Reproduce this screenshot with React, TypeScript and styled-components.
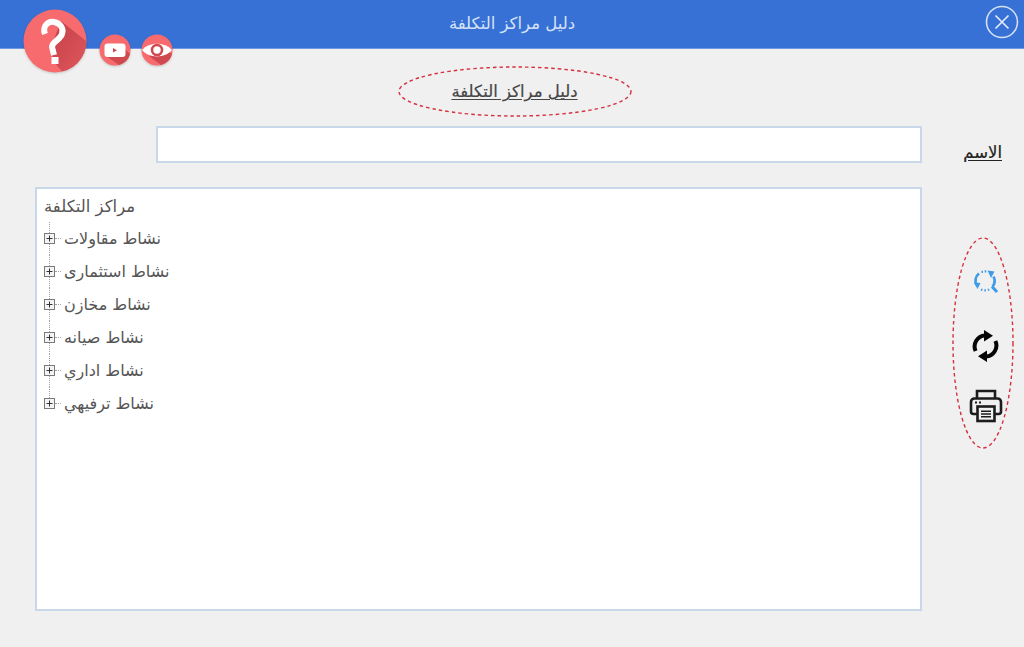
import React from "react";
import styled, { createGlobalStyle } from "styled-components";

const GlobalStyle = createGlobalStyle`
  html, body {
    margin: 0;
    padding: 0;
    background: #f0f0f0;
  }
  * {
    box-sizing: border-box;
  }
`;

const branches = [
  "نشاط مقاولات",
  "نشاط استثمارى",
  "نشاط مخازن",
  "نشاط صيانه",
  "نشاط اداري",
  "نشاط ترفيهي",
];

const Dashes: React.FC<{ width: number; height: number }> = ({ width, height }) => (
  <DashSvg width={width} height={height} viewBox={`0 0 ${width} ${height}`}>
    <ellipse
      cx={width / 2}
      cy={height / 2}
      rx={width / 2 - 1}
      ry={height / 2 - 1}
      fill="none"
      stroke="#d5303e"
      strokeWidth="1.4"
      strokeDasharray="3.5 3"
    />
  </DashSvg>
);

const HelpIcon = () => (
  <svg width="64" height="64" viewBox="0 0 64 64">
    <defs>
      <clipPath id="helpClip">
        <circle cx="32" cy="32" r="31.5" />
      </clipPath>
      <linearGradient id="helpShade" x1="0.2" y1="0.2" x2="1" y2="1">
        <stop offset="0" stopColor="#c9454c" />
        <stop offset="1" stopColor="#e25a5f" />
      </linearGradient>
    </defs>
    <circle cx="32" cy="32" r="31.5" fill="#f76a6d" />
    <path d="M38 12 L68 36 L68 60 L44 68 L30 52 L28 38 Z" fill="url(#helpShade)" clipPath="url(#helpClip)" />
    <path
      d="M22 25 C19 17 25 12 31 13 C37 14 41 19 39 25 C37 31 29 33 29 38 L31 46"
      fill="none"
      stroke="#fff"
      strokeWidth="6"
    />
    <rect x="28.5" y="48" width="7" height="7" fill="#fff" />
  </svg>
);

const VideoIcon = () => (
  <svg width="32" height="32" viewBox="0 0 32 32">
    <circle cx="16" cy="16" r="15.5" fill="#f76a6d" />
    <path d="M20 10 L31 20 A15.5 15.5 0 0 1 20 31 L7 22 Z" fill="#d0494f" />
    <rect x="5.5" y="9.5" width="21" height="13.5" rx="3" fill="#fff" />
    <path d="M14 14 L18 16.3 L14 18.6 Z" fill="#d0494f" />
  </svg>
);

const EyeIcon = () => (
  <svg width="32" height="32" viewBox="0 0 32 32">
    <circle cx="16" cy="16" r="15.5" fill="#f76a6d" />
    <path d="M26 17 L31 20 A15.5 15.5 0 0 1 20 31 L8 22 Z" fill="#d0494f" />
    <path d="M1 16 C8 7.5 24 7.5 31 16 C24 24.5 8 24.5 1 16 Z" fill="#fff" />
    <circle cx="16" cy="16" r="5" fill="none" stroke="#d0494f" strokeWidth="2.6" />
  </svg>
);

const CloseIcon = () => (
  <svg width="34" height="34" viewBox="0 0 34 34">
    <circle cx="17" cy="17" r="15.5" fill="none" stroke="#d5e1f5" strokeWidth="1.6" />
    <path d="M10.5 10.5 L23.5 23.5 M23.5 10.5 L10.5 23.5" stroke="#e6edf9" strokeWidth="1.6" />
  </svg>
);

const SearchSpinIcon = () => (
  <svg width="26" height="26" viewBox="0 0 26 26">
    <g fill="none" stroke="#3d9be9">
      <path d="M3.6 16 A9 9 0 0 1 6 4.5" strokeWidth="2.6" />
      <path d="M8.5 2.8 H10 M11.7 2.4 H13.2" strokeWidth="2.2" />
      <path d="M20.5 7.5 A9 9 0 0 1 19.5 17.5" strokeWidth="2.6" />
      <path d="M8 20.6 L9.4 21 M11.4 21.4 L12.9 21.4 M14.9 21 L16.2 20.4" strokeWidth="2.2" />
      <path d="M19 17.5 L24 23" strokeWidth="3" />
    </g>
    <path d="M0.8 13.5 L7.5 14 L4.5 20 Z M14.5 1.5 L21.5 2.5 L18 9 Z" fill="#3d9be9" />
  </svg>
);

const RefreshIcon = () => (
  <svg width="27" height="32" viewBox="0 0 27 32">
    <path
      d="M3.6 21 A11 11 0 0 1 13 5.5 M23.4 11 A11 11 0 0 1 14 26.5"
      fill="none"
      stroke="#050505"
      strokeWidth="4"
    />
    <path d="M12 0 L21 5.8 L12 11.5 Z M15 32 L6 26.2 L15 20.5 Z" fill="#050505" />
  </svg>
);

const PrintIcon = () => (
  <svg width="34" height="34" viewBox="0 0 34 34" fill="none" stroke="#1c1c1c">
    <path d="M8 10 V2 H26 V10" strokeWidth="2.6" />
    <path d="M8 25 H4.5 A2.5 2.5 0 0 1 2 22.5 V13 A3.5 3.5 0 0 1 5.5 9.5 H28.5 A3.5 3.5 0 0 1 32 13 V22.5 A2.5 2.5 0 0 1 29.5 25 H26" strokeWidth="2.6" />
    <rect x="8.5" y="17.5" width="17" height="14.5" strokeWidth="2.6" />
    <path d="M12 22.2 H22 M12 25 H22 M12 27.8 H22" strokeWidth="1.5" />
    <path d="M6 13.5 H8 M10 13.5 H12" strokeWidth="1.8" />
  </svg>
);

const ExpandBox = () => (
  <BoxSvg width="11" height="11" viewBox="0 0 11 11">
    <rect x="0.5" y="0.5" width="10" height="10" fill="#f4f4f4" stroke="#7a7a7a" />
    <path d="M2.5 5.5 H8.5 M5.5 2.5 V8.5" stroke="#333" />
  </BoxSvg>
);

export default function App() {
  return (
    <>
      <GlobalStyle />
      <Page>
        <Header>
          <HelpLinks>
            <HelpLink $big>
              <HelpIcon />
            </HelpLink>
            <HelpLink>
              <VideoIcon />
            </HelpLink>
            <HelpLink>
              <EyeIcon />
            </HelpLink>
          </HelpLinks>
          <HeaderTitle>دليل مراكز التكلفة</HeaderTitle>
          <CloseButton>
            <CloseIcon />
          </CloseButton>
        </Header>

        <TitleRow>
          <PageTitle>
            <Dashes width={234} height={51} />
            دليل مراكز التكلفة
          </PageTitle>
        </TitleRow>

        <FormGrid>
          <NameInput />
          <NameLabel>الاسم</NameLabel>

          <TreeBox>
            <TreeRoot>مراكز التكلفة</TreeRoot>
            <TreeList>
              {branches.map((name) => (
                <TreeItem key={name}>
                  <ExpandBox />
                  <TreeConnector />
                  <span>{name}</span>
                </TreeItem>
              ))}
            </TreeList>
          </TreeBox>

          <Actions>
            <Dashes width={62} height={212} />
            <ActionButton $height={60}>
              <SearchSpinIcon />
            </ActionButton>
            <ActionButton $height={68}>
              <RefreshIcon />
            </ActionButton>
            <ActionButton $height={52}>
              <PrintIcon />
            </ActionButton>
          </Actions>
        </FormGrid>
      </Page>
    </>
  );
}

const Page = styled.div`
  position: relative;
  width: 1024px;
  height: 647px;
  overflow: hidden;
  background: #f0f0f0;
  font-family: "DejaVu Sans", "Noto Sans", sans-serif;
  color: #444;
`;

const Header = styled.header`
  position: relative;
  display: flex;
  align-items: center;
  justify-content: center;
  height: 49px;
  background: #3871d5;
  border-bottom: 1px solid #6f98e0;
`;

const HeaderTitle = styled.div`
  margin-top: -1px;
  font-size: 16.5px;
  color: #d6e3f8;
`;

const HelpLinks = styled.div`
  position: absolute;
  top: 9px;
  left: 23px;
  display: flex;
  align-items: flex-start;
  gap: 10px;
  z-index: 2;
`;

const HelpLink = styled.div<{ $big?: boolean }>`
  display: flex;
  margin-top: ${(p) => (p.$big ? "0" : "25px")};
  margin-right: ${(p) => (p.$big ? "2px" : "0")};
  filter: drop-shadow(0 1px 1px rgba(0, 0, 0, 0.18));
`;

const CloseButton = styled.div`
  position: absolute;
  top: 5px;
  right: 5px;
  display: flex;
`;

const TitleRow = styled.div`
  display: flex;
  justify-content: center;
  height: 77px;
  padding-top: 17px;
  padding-left: 5px;
`;

const PageTitle = styled.h1`
  position: relative;
  display: flex;
  align-items: center;
  justify-content: center;
  width: 234px;
  height: 51px;
  margin: 0;
  font-size: 16.5px;
  font-weight: 400;
  color: #454545;
  text-decoration: underline;
  text-underline-offset: 2px;
  -webkit-text-stroke: 0.2px #454545;
`;

const DashSvg = styled.svg`
  position: absolute;
  top: 0;
  left: 0;
  pointer-events: none;
`;

const FormGrid = styled.div`
  display: grid;
  grid-template-columns: 887px 102px;
  grid-template-rows: 37px 424px;
  row-gap: 24px;
  margin-left: 35px;
`;

const NameInput = styled.div`
  height: 37px;
  margin-left: 121px;
  background: #fff;
  border: 2px solid #c8d7ea;
`;

const NameLabel = styled.div`
  align-self: end;
  justify-self: end;
  margin-right: 22px;
  font-size: 16.5px;
  line-height: 20px;
  color: #222;
  text-decoration: underline;
  text-underline-offset: 2px;
  -webkit-text-stroke: 0.2px #222;
`;

const TreeBox = styled.div`
  background: #fff;
  border: 2px solid #c8d7ea;
  padding: 6px 7px;
`;

const TreeRoot = styled.div`
  height: 24px;
  line-height: 24px;
  font-size: 16.5px;
  color: #555;
`;

const TreeList = styled.div`
  margin-top: 3px;
`;

const TreeItem = styled.div`
  position: relative;
  display: flex;
  align-items: center;
  height: 33px;
  font-size: 16px;
  color: #555;

  &::before {
    content: "";
    position: absolute;
    left: 5px;
    top: 0;
    height: 17px;
    border-left: 1px dotted #a0a0a0;
  }

  &:not(:last-child)::after {
    content: "";
    position: absolute;
    left: 5px;
    top: 17px;
    bottom: 0;
    border-left: 1px dotted #a0a0a0;
  }
`;

const BoxSvg = styled.svg`
  position: relative;
  z-index: 1;
  flex: none;
`;

const TreeConnector = styled.i`
  width: 6px;
  margin: 0 3px 0 0;
  border-top: 1px dotted #a0a0a0;
`;

const Actions = styled.div`
  position: relative;
  display: flex;
  flex-direction: column;
  align-items: center;
  justify-self: start;
  width: 62px;
  height: 212px;
  margin-left: 30px;
  margin-top: 50px;
  padding: 15px 0 0 5px;
`;

const ActionButton = styled.div<{ $height: number }>`
  display: flex;
  align-items: center;
  justify-content: center;
  height: ${(p) => p.$height}px;
`;
